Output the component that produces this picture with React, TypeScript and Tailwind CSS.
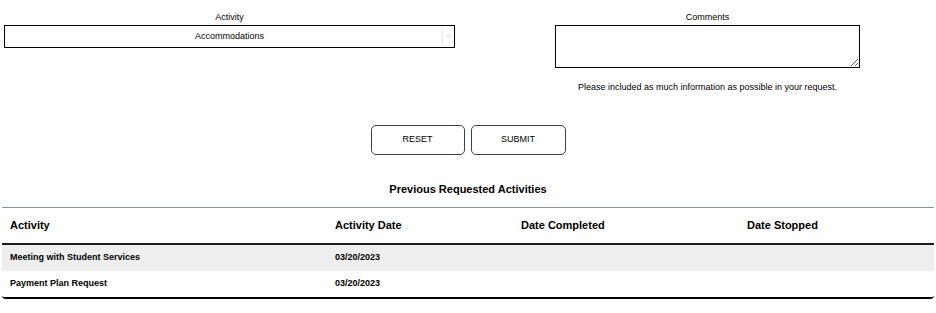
import { ChevronDown } from 'lucide-react';

const rows = [
  { activity: 'Meeting with Student Services', date: '03/20/2023', completed: '', stopped: '' },
  { activity: 'Payment Plan Request', date: '03/20/2023', completed: '', stopped: '' },
];

export default function App() {
  return (
    <div className="w-[936px] h-[313px] bg-white text-black font-['Liberation_Sans',Arial,sans-serif] overflow-hidden">
      <div className="flex pt-[11px]">
        <div className="w-[455px] pl-[4px] flex flex-col items-center">
          <label className="text-[9px] leading-[12px] mb-[2px]">Activity</label>
          <div className="relative w-[451px] h-[23px] pt-[1px] border border-black flex items-center justify-center">
            <span className="text-[9px]">Accommodations</span>
            <div className="absolute right-0 top-[2px] bottom-[2px] w-[12px] border-l border-gray-200 flex items-center justify-center">
              <ChevronDown className="w-[7px] h-[7px] text-gray-400" strokeWidth={2} />
            </div>
          </div>
        </div>
        <div className="flex-1 flex flex-col items-center pl-[24px]">
          <label className="text-[9px] leading-[12px] mb-[2px]">Comments</label>
          <textarea className="w-[305px] h-[43px] border border-black resize outline-none" />
          <p className="text-[9px] mt-[13px] leading-[12px]">Please included as much information as possible in your request.</p>
        </div>
      </div>

      <div className="flex justify-center gap-[6px] mt-[32px]">
        <button className="w-[94px] h-[30px] rounded-[5px] border border-gray-700 text-[9px]">RESET</button>
        <button className="w-[95px] h-[30px] rounded-[5px] border border-gray-700 text-[9px]">SUBMIT</button>
      </div>

      <h2 className="text-center text-[11px] font-bold mt-[27px] leading-[14px]">Previous Requested Activities</h2>

      <div className="mx-[2px] mt-[11px] w-[932px] border-t border-[#7a94b4] border-b-2 border-b-black rounded-b-[4px] overflow-hidden">
        <div className="grid grid-cols-[326px_186px_226px_1fr] h-[37px] items-center border-b-2 border-[#1a1a1a] text-[11px] font-bold">
          <div className="pl-[8px]">Activity</div>
          <div className="pl-[7px]">Activity Date</div>
          <div className="pl-[7px]">Date Completed</div>
          <div className="pl-[7px]">Date Stopped</div>
        </div>
        {rows.map((r, i) => (
          <div
            key={r.activity}
            className={`grid grid-cols-[326px_186px_226px_1fr] h-[26px] items-center text-[9px] font-bold ${i % 2 === 0 ? 'bg-[#eeeeee]' : 'bg-white'}`}
          >
            <div className="pl-[8px]">{r.activity}</div>
            <div className="pl-[7px]">{r.date}</div>
            <div className="pl-[7px]">{r.completed}</div>
            <div className="pl-[7px]">{r.stopped}</div>
          </div>
        ))}
      </div>
    </div>
  );
}
